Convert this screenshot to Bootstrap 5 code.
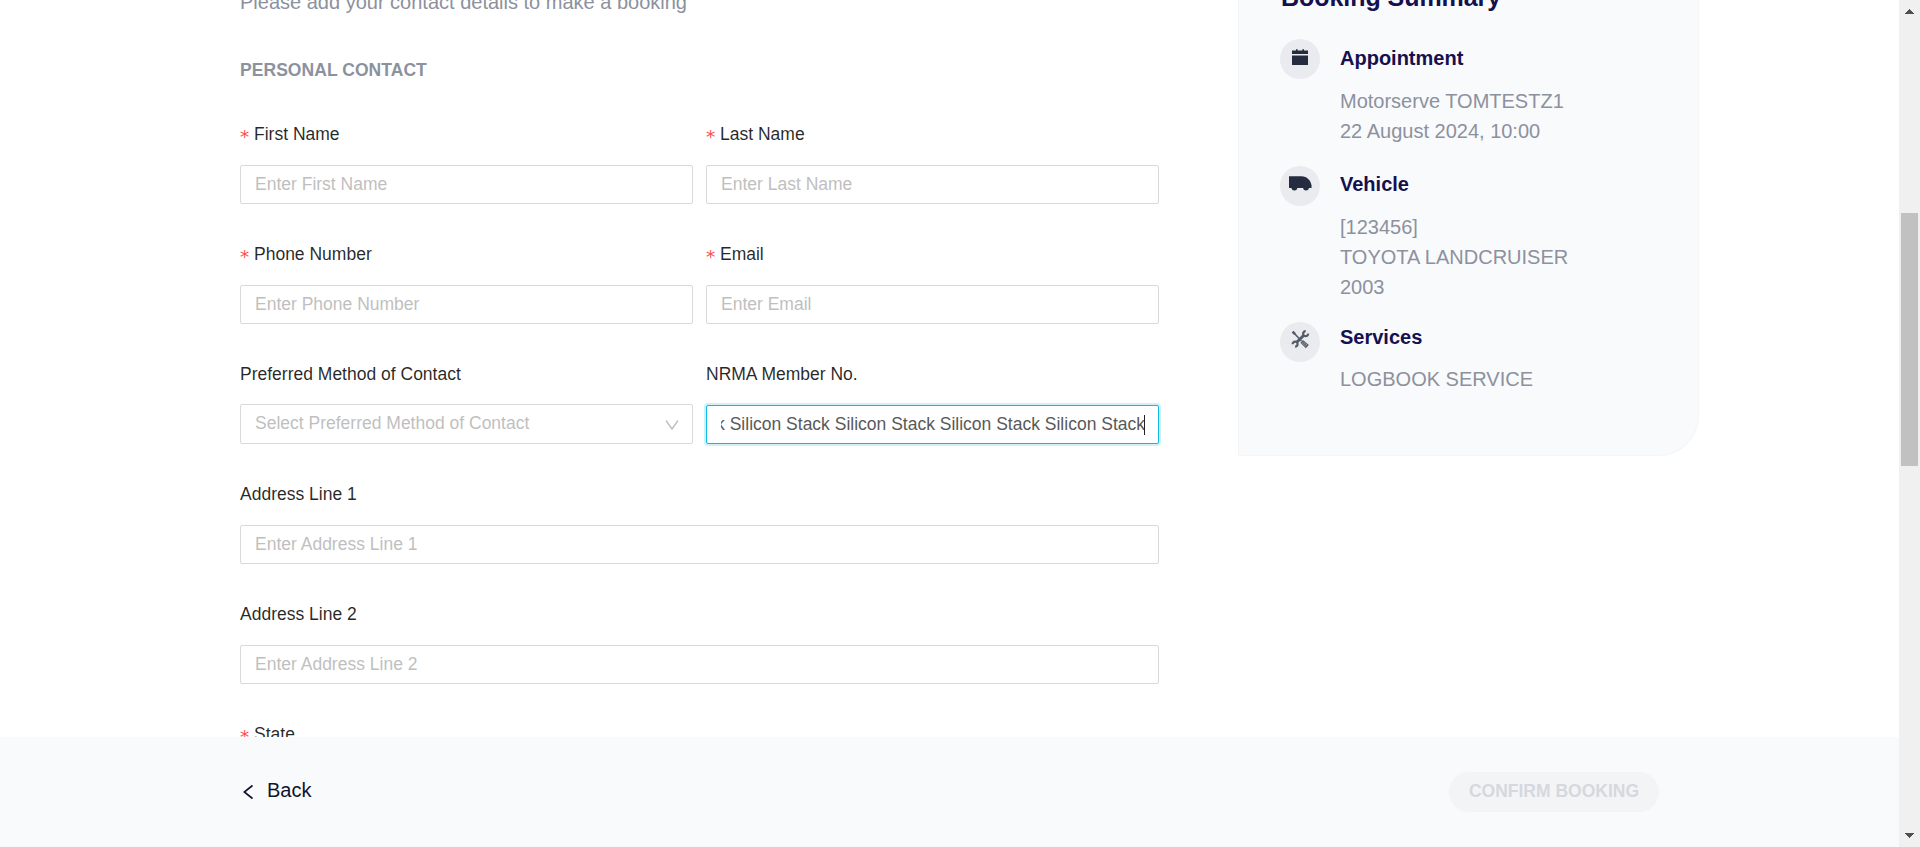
<!DOCTYPE html>
<html lang="en">
<head>
<meta charset="utf-8">
<meta name="viewport" content="width=device-width, initial-scale=1">
<title>Booking details</title>
<link href="https://cdn.jsdelivr.net/npm/bootstrap@5.3.0/dist/css/bootstrap.min.css" rel="stylesheet">
<style>
  body { font-family: "Liberation Sans", Arial, sans-serif; font-size: 17.5px; line-height: 25px; color: rgba(0,0,0,.85); background: #fff; }
  .page-scroll { padding-left: 240px; }
  .form-col { width: 919px; margin-right: 79px; margin-top: -13px; }
  .intro { font-size: 20px; line-height: 30px; color: #8c919e; margin-bottom: 41px; }
  .section-title { font-size: 17.5px; line-height: 25px; color: #8c919e; margin-bottom: 39px; letter-spacing: .05px; }
  .field-row { --bs-gutter-x: 13px; }
  .field { height: 120px; }
  .field label { display: block; height: 25px; margin-bottom: 18px; white-space: nowrap; }
  .req::before { content: "*"; display: inline-block; width: 9px; margin-right: 5px; color: #ff4d4f; font-family: "DejaVu Sans", sans-serif; font-size: 18.5px; line-height: 1; height: 17px; vertical-align: top; margin-top: 6px; }
  .form-control { height: 39px; padding: 0 14px; border: 1px solid #d9d9d9; border-radius: 2px; font-size: 17.5px; line-height: 25px; color: #595959; }
  .form-control::placeholder { color: #bfbfbf; opacity: 1; }
  .field .top-label { margin-bottom: 17px; }
  .choice { height: 40px; color: #bfbfbf; padding: 0 13px 2px 14px; }
  .active-input { border-color: #0fb9e1; box-shadow: 0 0 0 2px rgba(15,185,225,.2); padding-right: 13px; }
  .clip { overflow: hidden; white-space: nowrap; height: 25px; }
  .caret { width: 1px; height: 20px; background: #222; margin-left: -1px; }
  .summary { width: 461px; height: 556px; margin-top: -100px; padding: 82px 40px 0 41px; background: #f9fafc; border: 1px solid #f4f5f7; border-radius: 0 40px 40px 0; font-size: 20px; line-height: 30px; color: #8c919e; }
  .summary h2, .summary h3 { color: #15104f; font-weight: 700; line-height: 30px; margin: 0; }
  .summary h2 { font-size: 25px; margin: -1px 0 31px 1px; letter-spacing: -.05px; }
  .summary h3 { font-size: 20px; margin-bottom: 13px; }
  .disc { width: 40px; height: 40px; background: #eaebef; margin-right: 20px; }
  .foot { height: 110px; background: #f9fafc; padding: 0 240px; }
  .back { font-size: 20px; line-height: 30px; color: #0d1530; padding-left: 3px; padding-bottom: 4px; }
  .back svg { margin: 3px 14px 0 0; }
  .confirm { width: 210px; height: 40px; background: #f3f4f6; color: #d5d8de; font-size: 17.5px; padding: 0 0 2px; }
  .sbar { width: 21px; background: #f0f0f0; padding: 9px 0; }
  .thumb { width: 17px; height: 253px; background: #c1c1c1; margin-top: 199px; }
</style>
</head>
<body class="overflow-hidden">
<div class="d-flex vh-100">
  <div class="d-flex flex-column flex-grow-1">
    <main class="page-scroll d-flex align-items-start flex-grow-1 overflow-hidden" style="height:0">
      <form class="form-col flex-shrink-0">
        <p class="intro">Please add your contact details to make a booking</p>
        <h6 class="section-title fw-bold">PERSONAL CONTACT</h6>
        <div class="row field-row">
          <div class="col-6 field"><label class="req" for="fn">First Name</label><input id="fn" class="form-control" placeholder="Enter First Name"></div>
          <div class="col-6 field"><label class="req" for="ln">Last Name</label><input id="ln" class="form-control" placeholder="Enter Last Name"></div>
          <div class="col-6 field"><label class="req" for="ph">Phone Number</label><input id="ph" class="form-control" placeholder="Enter Phone Number"></div>
          <div class="col-6 field"><label class="req" for="em">Email</label><input id="em" class="form-control" placeholder="Enter Email"></div>
          <div class="col-6 field"><label class="top-label">Preferred Method of Contact</label>
            <div class="form-control choice d-flex align-items-center justify-content-between"><span>Select Preferred Method of Contact</span>
              <svg class="mt-1" width="14" height="12" viewBox="0 0 14 12" fill="none" stroke="#bfbfbf" stroke-width="1.4"><path d="M1 1.500 7 10 13 1.500"/></svg></div></div>
          <div class="col-6 field"><label>NRMA Member No.</label>
            <div class="form-control active-input d-flex align-items-center"><div class="clip d-flex justify-content-end align-items-center w-100"><span>Silicon Stack Silicon Stack Silicon Stack Silicon Stack Silicon Stack</span><span class="caret flex-shrink-0"></span></div></div></div>
          <div class="col-12 field"><label for="a1">Address Line 1</label><input id="a1" class="form-control" placeholder="Enter Address Line 1"></div>
          <div class="col-12 field"><label for="a2">Address Line 2</label><input id="a2" class="form-control" placeholder="Enter Address Line 2"></div>
          <div class="col-6 field"><label class="req">State</label></div>
        </div>
      </form>
      <aside class="summary flex-shrink-0">
        <h2>Booking Summary</h2>
        <div class="d-flex" style="margin-bottom:23px">
          <div class="disc rounded-circle flex-shrink-0" style="margin-top:-4px"><svg class="d-block" width="40" height="40" fill="#252c3f"><path d="M12 11.500h4v-1.300h1.600v1.300h4.800v-1.300H24v1.300h4V15H12zM12 16.500h16V26H12z"/></svg></div>
          <div><h3>Appointment</h3>Motorserve TOMTESTZ1<br>22 August 2024, 10:00</div>
        </div>
        <div class="d-flex" style="margin-bottom:20px">
          <div class="disc rounded-circle flex-shrink-0" style="margin-top:-3px"><svg class="d-block" width="40" height="40" fill="#252c3f"><path d="M9 10.300h12.500c5.500 0 9 4.200 10 9v2.700H9z"/><circle cx="14.400" cy="21.500" r="2.900"/><circle cx="26" cy="21.500" r="2.900"/></svg></div>
          <div><h3>Vehicle</h3>[123456]<br>TOYOTA LANDCRUISER<br>2003</div>
        </div>
        <div class="d-flex">
          <div class="disc rounded-circle flex-shrink-0"><svg class="d-block" width="40" height="40" fill="none" stroke="#555b69"><path d="m13 10 8.500 9" stroke-width="1.700"/><path d="m12.600 9.600 2.400 2.500" stroke-width="2.600"/><path d="m17 20 6.600-6.500" stroke-width="3"/><path d="M25.700 9.200a2.500 2.500 0 1 0 2.400 2.400" stroke-width="2.200"/><path d="M12.600 22.200a2.500 2.500 0 1 1 2.500 2.400" stroke-width="2.200"/><path d="m21.200 20.800 1.800-1.900 5 4.200-2.200 2.300z" stroke-width="1.200"/><path d="m22.300 20 4.500 4.300" stroke-width="1.200"/></svg></div>
          <div><h3 style="margin-bottom:12px">Services</h3>LOGBOOK SERVICE</div>
        </div>
      </aside>
    </main>
    <footer class="foot d-flex align-items-center justify-content-between">
      <a class="back d-flex align-items-center text-decoration-none" href="#"><svg width="10" height="16" viewBox="0 0 10 16" fill="none" stroke="#0d1530" stroke-width="1.700"><path d="M9.500 1.500 1.300 8l8.200 6.500"/></svg>Back</a>
      <button class="confirm btn rounded-pill border-0 fw-bold" type="button">CONFIRM BOOKING</button>
    </footer>
  </div>
  <div class="sbar d-flex flex-column align-items-center flex-shrink-0">
    <svg width="9" height="5" fill="#505050" shape-rendering="crispEdges"><path d="M4.500 0 9 5H0z"/></svg>
    <div class="thumb"></div>
    <svg class="mt-auto" width="9" height="5" fill="#505050" shape-rendering="crispEdges"><path d="M0 0h9L4.500 5z"/></svg>
  </div>
</div>
<script src="https://cdn.jsdelivr.net/npm/bootstrap@5.3.0/dist/js/bootstrap.bundle.min.js"></script>
</body>
</html>
